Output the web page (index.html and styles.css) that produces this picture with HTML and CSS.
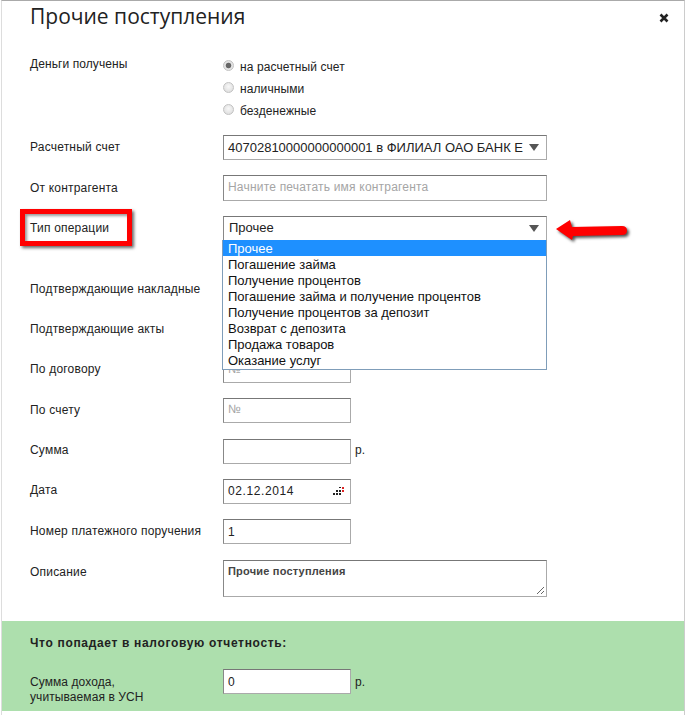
FILE: index.html
```html
<!DOCTYPE html>
<html lang="ru">
<head>
<meta charset="utf-8">
<title>Прочие поступления</title>
<link rel="stylesheet" href="styles.css">
</head>
<body>
<div class="modal">
  <header class="head">
    <h1 class="title">Прочие поступления</h1>
    <svg class="close" width="10" height="10" viewBox="0 0 10 10"><path d="M1.5 1.5l7 7M8.5 1.5l-7 7" stroke="#222" stroke-width="2.6" fill="none"/></svg>
  </header>
  <form class="form">
    <div class="row row-radios">
      <div class="label">Деньги получены</div>
      <div class="radios">
        <div class="radio"><span class="dot on"></span>на расчетный счет</div>
        <div class="radio"><span class="dot"></span>наличными</div>
        <div class="radio"><span class="dot"></span>безденежные</div>
      </div>
    </div>
    <div class="row row-low">
      <div class="label">Расчетный счет</div>
      <div class="box wide select">40702810000000000001 в ФИЛИАЛ ОАО БАНК Е<span class="tri"></span></div>
    </div>
    <div class="row row-tall">
      <div class="label">От контрагента</div>
      <div class="box wide tall ph">Начните печатать имя контрагента</div>
    </div>
    <div class="row row-type row-low">
      <div class="label">Тип операции</div>
      <div class="box wide select">Прочее<span class="tri"></span></div>
    </div>
    <div class="row"><div class="label">Подтверждающие накладные</div><div class="box narrow"></div></div>
    <div class="row"><div class="label">Подтверждающие акты</div><div class="box narrow"></div></div>
    <div class="row"><div class="label">По договору</div><div class="box narrow ph">№</div></div>
    <div class="row"><div class="label">По счету</div><div class="box narrow ph">№</div></div>
    <div class="row"><div class="label">Сумма</div><div class="box narrow"></div><span class="unit">р.</span></div>
    <div class="row"><div class="label">Дата</div><div class="box narrow date">02.12.2014
      <svg class="cal" width="11" height="8" viewBox="0 0 11 8"><path d="M6 0h2v1H6zM3 3h2v2H3zM6 3h2v2H6zM0 6h2v2H0zM3 6h2v2H3zM6 6h2v2H6z" fill="#222"/><path d="M9 0h2v2H9zM9 3h2v2H9z" fill="#d22"/></svg>
    </div></div>
    <div class="row"><div class="label">Номер платежного поручения</div><div class="box narrow num">1</div></div>
    <div class="row row-desc row-low">
      <div class="label">Описание</div>
      <div class="box wide area">Прочие поступления
        <svg class="grip" width="9" height="9" viewBox="0 0 9 9"><path d="M1 8l7-7M5 8l3-3" stroke="#666" fill="none"/></svg>
      </div>
    </div>
    <section class="tax">
      <h2 class="tax-title">Что попадает в налоговую отчетность:</h2>
      <div class="row row-tax">
        <div class="label label-two">Сумма дохода,<br>учитываемая в УСН</div>
        <div class="box narrow num">0</div><span class="unit">р.</span>
      </div>
    </section>
  </form>

  <ul class="list">
    <li class="item active">Прочее</li>
    <li class="item">Погашение займа</li>
    <li class="item">Получение процентов</li>
    <li class="item">Погашение займа и получение процентов</li>
    <li class="item">Получение процентов за депозит</li>
    <li class="item">Возврат с депозита</li>
    <li class="item">Продажа товаров</li>
    <li class="item">Оказание услуг</li>
  </ul>
  <div class="mark"></div>
  <svg class="arrow" width="78" height="32" viewBox="0 0 78 32">
    <path d="M1 13 L15 4 L17 11 L67 10 Q72 10 72 14.5 Q72 19 67 19 L18 20 L17 24 Z" fill="#f00"/>
  </svg>
</div>
</body>
</html>
```
FILE: styles.css
```css
* { box-sizing: border-box; }
html, body { margin: 0; padding: 0; background: #fff; }
body { width: 685px; height: 715px; overflow: hidden; font-family: "Liberation Sans", Arial, sans-serif; font-size: 12px; color: #222; }
.modal { position: relative; height: 715px; border-top: 1px solid #aaa; margin-left: 1px; border-left: 1px solid #ddd; border-right: 1px solid #ccc; }
.head { height: 54px; padding: 0 0 0 28px; display: flex; justify-content: space-between; }
.title { margin: -1px 0 0; font: 400 21px/32px "Open Sans", sans-serif; color: #222; }
.close { margin: 12px 15px 0 0; }
.form { margin: 0; }
.row { display: flex; align-items: flex-start; padding-left: 28px; margin-bottom: 15.33px; }
.label { width: 193px; flex: none; padding-top: 3.33px; line-height: 16px; letter-spacing: .2px; }
.row-low .label { padding-top: 4px; }
.row-tall { margin-bottom: 15px; }
.row-tall .label { padding-top: 5px; }
.row-radios { margin-bottom: 14px; }
.row-radios .label { padding-top: 1px; letter-spacing: .08px; }
.radios { display: flex; flex-direction: column; margin-left: 0; }
.radio { height: 22px; display: flex; align-items: center; letter-spacing: .1px; padding-top: 2px; }
.dot { width: 11px; height: 11px; border-radius: 50%; border: 1px solid #c2c2c2; background: radial-gradient(circle at 50% 40%, #f8f8f8, #d8d8d8); margin: -4px 6px 0 0; }
.dot.on { background: radial-gradient(circle, #666 0 2.4px, #e4e4e4 3.2px); }
.box { height: 25px; border: 1px solid #aaa; border-top-color: #777; border-left-color: #888; background: #fff; padding: 0 4px; line-height: 22px; font-size: 12px; letter-spacing: .2px; position: relative; }
.wide { width: 324px; }
.narrow { width: 128px; }
.tall { height: 26px; line-height: 23px; }
.ph { color: #a5a5a5; }
.narrow.ph { line-height: 20px; }
.num { line-height: 24px; }
.select { font-size: 13px; letter-spacing: 0; line-height: 23px; }
.row-type .select { line-height: 22px; padding-left: 5px; }
.tri { position: absolute; right: 7px; top: 8px; width: 0; height: 0; border: 5px solid transparent; border-top: 7px solid #555; border-bottom: 0; }
.row-type { margin-bottom: 36px; }
.unit { margin: 3px 0 0 4px; line-height: 16px; }
.row-tax .unit { margin-top: 5px; }
.date { letter-spacing: .6px; }
.cal { position: absolute; right: 6px; top: 7px; }
.area { height: 37px; font-weight: 700; font-size: 11px; letter-spacing: .2px; line-height: 20px; color: #444; }
.grip { position: absolute; right: 1px; bottom: 1px; }
.row-desc { margin-bottom: 24px; }
.tax { background: #addfad; height: 90px; padding-top: 13px; }
.tax-title { margin: 0 0 17px 28px; font-size: 12px; line-height: 18px; font-weight: 700; letter-spacing: .67px; color: #222; }
.row-tax { margin: 0; }
.label-two { padding-top: 6px; line-height: 15px; letter-spacing: .08px; }
.list { position: absolute; left: 220px; top: 239px; width: 325px; height: 130px; margin: 0; padding: 0; list-style: none; background: #fff; border: 1px solid #7f9db9; border-top: 0; font-size: 13px; }
.item { height: 16px; line-height: 18px; padding-left: 5px; color: #111; }
.active { background: #1e90ff; color: #fff; }
.mark { position: absolute; left: 18px; top: 208px; width: 112px; height: 37px; border: 5px solid #f00; box-shadow: 2px 2px 3px rgba(0,0,0,.6), inset 2px 2px 3px rgba(0,0,0,.4); }
.arrow { position: absolute; left: 553px; top: 215px; filter: drop-shadow(2px 2px 1.5px rgba(0,0,0,.7)); }
```
